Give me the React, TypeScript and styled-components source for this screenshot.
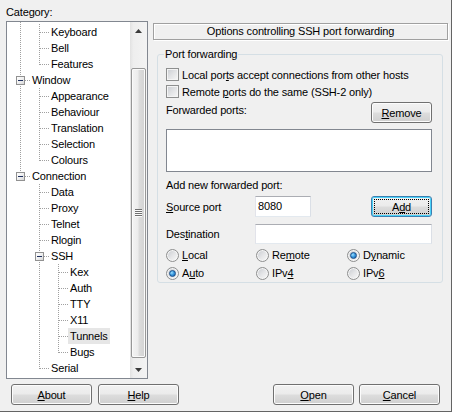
import React from 'react';
import styled, { createGlobalStyle } from 'styled-components';

const GlobalStyle = createGlobalStyle`
  html, body {
    margin: 0;
    padding: 0;
    background: #f0f0f0;
  }
  * {
    box-sizing: border-box;
  }
`;

const Dialog = styled.div`
  width: 452px;
  height: 412px;
  background: #f0f0f0;
  border-right: 1px solid #646464;
  border-bottom: 1px solid #646464;
  font-family: "Liberation Sans", Arial, sans-serif;
  font-size: 11px;
  letter-spacing: -0.15px;
  color: #000;
  display: flex;
  flex-direction: column;
`;

const Body = styled.div`
  display: flex;
  height: 379px;
`;

const CategoryPane = styled.div`
  width: 142px;
  margin-left: 6px;
  padding-top: 6px;
  display: flex;
  flex-direction: column;
`;

const Caption = styled.div`
  height: 15px;
  line-height: 13px;
`;

const TreeBox = styled.div`
  height: 358px;
  border: 1px solid #828790;
  background: #fff;
  display: flex;
  overflow: hidden;
`;

const TreeView = styled.div`
  flex: 1;
  overflow: hidden;
  padding-left: 4px;
`;

const TreeRow = styled.div<{ $h?: number }>`
  display: flex;
  height: ${p => p.$h ?? 16}px;
  white-space: nowrap;
`;

type Vert = 'none' | 'full' | 'top' | 'bottom';

const dotV = 'repeating-linear-gradient(to bottom, #a0a0a0 0 1px, transparent 1px 2px)';
const dotH = 'repeating-linear-gradient(to right, #a0a0a0 0 1px, transparent 1px 2px)';

const guideBg = (v: Vert, h: boolean) => {
  const layers: string[] = [];
  if (v === 'full') layers.push(`${dotV} 9px 0 / 1px 100% no-repeat`);
  if (v === 'top') layers.push(`${dotV} 9px 0 / 1px 9px no-repeat`);
  if (v === 'bottom') layers.push(`${dotV} 9px 8px / 1px 8px no-repeat`);
  if (h) layers.push(`${dotH} 10px 8px / 9px 1px no-repeat`);
  return layers.length ? layers.join(', ') : 'none';
};

const Guide = styled.div<{ $v: Vert; $h?: boolean }>`
  width: 19px;
  flex: none;
  display: flex;
  align-items: center;
  background: ${p => guideBg(p.$v, !!p.$h)};
`;

const Toggle = styled.span`
  width: 9px;
  height: 9px;
  margin-left: 5px;
  border: 1px solid #919191;
  background: linear-gradient(135deg, #ffffff 0%, #f0f0f0 50%, #d6d6d6 100%);
  display: flex;
  align-items: center;
  justify-content: center;

  &::after {
    content: '';
    width: 5px;
    height: 1px;
    background: #1e2f5e;
  }
`;

const NodeLabel = styled.span<{ $selected?: boolean }>`
  padding: 0 2px;
  line-height: 16px;
  background: ${p => (p.$selected ? '#e6e6e6' : 'transparent')};
`;

const ScrollBar = styled.div`
  width: 17px;
  flex: none;
  display: flex;
  flex-direction: column;
  background: linear-gradient(to right, #e2e2e2 0%, #eeeeee 20%, #f3f3f3 100%);
`;

const ScrollArrow = styled.div`
  height: 17px;
  flex: none;
  display: flex;
  align-items: center;
  justify-content: center;
`;

const ScrollGap = styled.div<{ $h?: number }>`
  flex: ${p => (p.$h ? `0 0 ${p.$h}px` : '1')};
`;

const Thumb = styled.div<{ $h: number }>`
  height: ${p => p.$h}px;
  flex: none;
  margin: 0 1px;
  border: 1px solid #979797;
  border-radius: 2px;
  background: linear-gradient(to right, #f4f4f4 0%, #ececec 45%, #dcdcdc 55%, #d2d2d2 100%);
  box-shadow: inset 0 0 0 1px #fafafa;
  display: flex;
  align-items: center;
  justify-content: center;
`;

const Grip = styled.div`
  width: 7px;
  height: 8px;
  background: repeating-linear-gradient(to bottom, #6f6f6f 0 1px, #fbfbfb 1px 2px);
`;

const OptionsPane = styled.div`
  width: 295px;
  margin-left: 5px;
  padding-top: 23px;
`;

const PanelTitle = styled.div`
  height: 17px;
  border: 1px solid #a0a0a0;
  box-shadow: inset 1px 1px 0 #ffffff, 1px 1px 0 #ffffff;
  text-align: center;
  line-height: 15px;
`;

const Group = styled.fieldset`
  margin: 7px 0 0 4px;
  width: 286px;
  min-width: 0;
  border: 1px solid #d5dfe5;
  border-radius: 3px;
  padding: 5px 10px 1px 8px;
`;

const GroupTitle = styled.legend`
  padding: 0 1px;
  margin-left: -2px;
  line-height: 14px;
`;

const CheckRow = styled.label`
  display: flex;
  align-items: center;
  gap: 3px;
  height: 17px;
`;

const CheckBox = styled.span`
  width: 13px;
  height: 13px;
  flex: none;
  border: 1px solid #8e8f8f;
  background: linear-gradient(135deg, #c9ccd1 0%, #e2e3e5 50%, #f7f7f7 100%);
  box-shadow: inset 0 0 0 1px #f4f4f4;
`;

const FieldRow = styled.div<{ $gap?: number; $h?: number }>`
  display: flex;
  align-items: center;
  margin-top: ${p => p.$gap ?? 0}px;
  height: ${p => p.$h ?? 21}px;
`;

const TopLabel = styled.span`
  align-self: flex-start;
  margin-top: 1px;
  line-height: 14px;
  flex: 1;
`;

const FieldLabel = styled.span`
  width: 89px;
  flex: none;
`;

const PlainLabel = styled.div<{ $gap: number }>`
  margin-top: ${p => p.$gap}px;
  line-height: 14px;
`;

const ListBox = styled.div`
  margin-top: 6px;
  height: 43px;
  border: 1px solid #828790;
  background: #fff;
`;

const TextBox = styled.div<{ $w?: number }>`
  width: ${p => (p.$w ? `${p.$w}px` : 'auto')};
  flex: ${p => (p.$w ? 'none' : '1')};
  height: 100%;
  border: 1px solid;
  border-color: #abadb3 #dbdfe6 #e3e9ef #e2e3ea;
  background: #fff;
  padding-left: 2px;
  line-height: 18px;
`;

const Button = styled.button<{ $w: number; $focused?: boolean }>`
  width: ${p => p.$w}px;
  height: 21px;
  flex: none;
  padding: 0;
  font: inherit;
  letter-spacing: inherit;
  color: #000;
  border: 1px solid ${p => (p.$focused ? '#3c7fb1' : '#707070')};
  border-radius: 3px;
  background: linear-gradient(to bottom, #f2f2f2 0%, #ebebeb 48%, #dddddd 52%, #cfcfcf 100%);
  box-shadow: inset 0 0 0 1px ${p => (p.$focused ? '#48d2f9' : '#fcfcfc')};
  outline: ${p => (p.$focused ? '1px dotted #000' : 'none')};
  outline-offset: -4px;
`;

const Spacer = styled.div`
  flex: 1;
`;

const RadioGrid = styled.div`
  display: grid;
  grid-template-columns: 90px 91px 1fr;
  grid-auto-rows: 16px;
  row-gap: 2px;
  margin-top: 3px;
`;

const RadioItem = styled.label`
  display: flex;
  align-items: center;
  gap: 3px;
`;

const Radio = styled.span<{ $on?: boolean }>`
  width: 13px;
  height: 13px;
  flex: none;
  border-radius: 50%;
  border: 1px solid #8e8f8f;
  background: linear-gradient(135deg, #c6c9ce 0%, #e4e5e7 50%, #fafafa 100%);
  box-shadow: inset 0 0 0 1px #f6f6f6;
  display: flex;
  align-items: center;
  justify-content: center;

  &::after {
    content: '';
    display: ${p => (p.$on ? 'block' : 'none')};
    width: 5px;
    height: 5px;
    border-radius: 50%;
    border: 1px solid #1b4f8a;
    background: radial-gradient(circle at 35% 35%, #9fe0ff 0%, #3c9be0 45%, #0f5aa6 100%);
  }
`;

const ButtonBar = styled.div`
  display: flex;
  padding: 5px 11px 0 11px;
  gap: 6px;
`;

const PairGap = styled.div`
  width: 5px;
  flex: none;
  margin-left: -6px;
  margin-right: -6px;
`;

type TreeNode = { label: string; children?: TreeNode[]; selected?: boolean };
type FlatRow = {
  label: string;
  guides: boolean[];
  vert: Vert;
  hasKids: boolean;
  selected?: boolean;
};

const tree: TreeNode[] = [
  { label: 'Session', children: [{ label: 'Logging' }] },
  { label: 'Terminal', children: [{ label: 'Keyboard' }, { label: 'Bell' }, { label: 'Features' }] },
  {
    label: 'Window',
    children: [
      { label: 'Appearance' },
      { label: 'Behaviour' },
      { label: 'Translation' },
      { label: 'Selection' },
      { label: 'Colours' },
    ],
  },
  {
    label: 'Connection',
    children: [
      { label: 'Data' },
      { label: 'Proxy' },
      { label: 'Telnet' },
      { label: 'Rlogin' },
      {
        label: 'SSH',
        children: [
          { label: 'Kex' },
          { label: 'Auth' },
          { label: 'TTY' },
          { label: 'X11' },
          { label: 'Tunnels', selected: true },
          { label: 'Bugs' },
        ],
      },
      { label: 'Serial' },
    ],
  },
];

const flatten = (nodes: TreeNode[], guides: boolean[], out: FlatRow[]) => {
  nodes.forEach((n, i) => {
    const last = i === nodes.length - 1;
    const first = guides.length === 0 && i === 0;
    let vert: Vert = last ? 'top' : 'full';
    if (first) vert = last ? 'none' : 'bottom';
    out.push({ label: n.label, guides, vert, hasKids: !!n.children, selected: n.selected });
    if (n.children) flatten(n.children, [...guides, !last], out);
  });
  return out;
};

// the tree is scrolled down so that "Keyboard" is the first visible item
const SCROLLED = 3;
const rows = flatten(tree, [], []).slice(SCROLLED);

const ArrowUp = () => (
  <svg width="7" height="4" viewBox="0 0 7 4">
    <polygon points="3.5,0 7,4 0,4" fill="#3a3a3a" />
  </svg>
);

const ArrowDown = () => (
  <svg width="7" height="4" viewBox="0 0 7 4">
    <polygon points="0,0 7,0 3.5,4" fill="#3a3a3a" />
  </svg>
);

const App: React.FC = () => {
  return (
    <>
      <GlobalStyle />
      <Dialog>
        <Body>
          <CategoryPane>
            <Caption>Category:</Caption>
            <TreeBox>
              <TreeView>
                {/* sliver of the row scrolled off the top */}
                <TreeRow $h={2}>
                  <Guide $v="full" />
                </TreeRow>
                {rows.map((r, i) => (
                  <TreeRow key={i}>
                    {r.guides.map((g, j) => (
                      <Guide key={j} $v={g ? 'full' : 'none'} />
                    ))}
                    <Guide $v={r.vert} $h>
                      {r.hasKids && <Toggle />}
                    </Guide>
                    <NodeLabel $selected={r.selected}>{r.label}</NodeLabel>
                  </TreeRow>
                ))}
              </TreeView>
              <ScrollBar>
                <ScrollArrow>
                  <ArrowUp />
                </ScrollArrow>
                <ScrollGap $h={29} />
                <Thumb $h={290}>
                  <Grip />
                </Thumb>
                <ScrollGap />
                <ScrollArrow>
                  <ArrowDown />
                </ScrollArrow>
              </ScrollBar>
            </TreeBox>
          </CategoryPane>

          <OptionsPane>
            <PanelTitle>Options controlling SSH port forwarding</PanelTitle>
            <Group>
              <GroupTitle>Port forwarding</GroupTitle>
              <CheckRow>
                <CheckBox />
                <span>
                  Local por<u>t</u>s accept connections from other hosts
                </span>
              </CheckRow>
              <CheckRow>
                <CheckBox />
                <span>
                  Remote <u>p</u>orts do the same (SSH-2 only)
                </span>
              </CheckRow>
              <FieldRow $gap={2}>
                <TopLabel>Forwarded ports:</TopLabel>
                <Button $w={61}>
                  <u>R</u>emove
                </Button>
              </FieldRow>
              <ListBox />
              <PlainLabel $gap={6}>Add new forwarded port:</PlainLabel>
              <FieldRow $gap={4}>
                <FieldLabel>
                  <u>S</u>ource port
                </FieldLabel>
                <TextBox $w={56}>8080</TextBox>
                <Spacer />
                <Button $w={61} $focused>
                  A<u>d</u>d
                </Button>
              </FieldRow>
              <FieldRow $gap={7} $h={20}>
                <FieldLabel>
                  Des<u>t</u>ination
                </FieldLabel>
                <TextBox />
              </FieldRow>
              <RadioGrid>
                <RadioItem>
                  <Radio />
                  <span>
                    <u>L</u>ocal
                  </span>
                </RadioItem>
                <RadioItem>
                  <Radio />
                  <span>
                    Re<u>m</u>ote
                  </span>
                </RadioItem>
                <RadioItem>
                  <Radio $on />
                  <span>
                    D<u>y</u>namic
                  </span>
                </RadioItem>
                <RadioItem>
                  <Radio $on />
                  <span>
                    A<u>u</u>to
                  </span>
                </RadioItem>
                <RadioItem>
                  <Radio />
                  <span>
                    IPv<u>4</u>
                  </span>
                </RadioItem>
                <RadioItem>
                  <Radio />
                  <span>
                    IPv<u>6</u>
                  </span>
                </RadioItem>
              </RadioGrid>
            </Group>
          </OptionsPane>
        </Body>

        <ButtonBar>
          <Button $w={81}>
            <u>A</u>bout
          </Button>
          <Button $w={81}>
            <u>H</u>elp
          </Button>
          <Spacer />
          <Button $w={81}>
            <u>O</u>pen
          </Button>
          <PairGap />
          <Button $w={81}>
            <u>C</u>ancel
          </Button>
        </ButtonBar>
      </Dialog>
    </>
  );
};

export default App;
